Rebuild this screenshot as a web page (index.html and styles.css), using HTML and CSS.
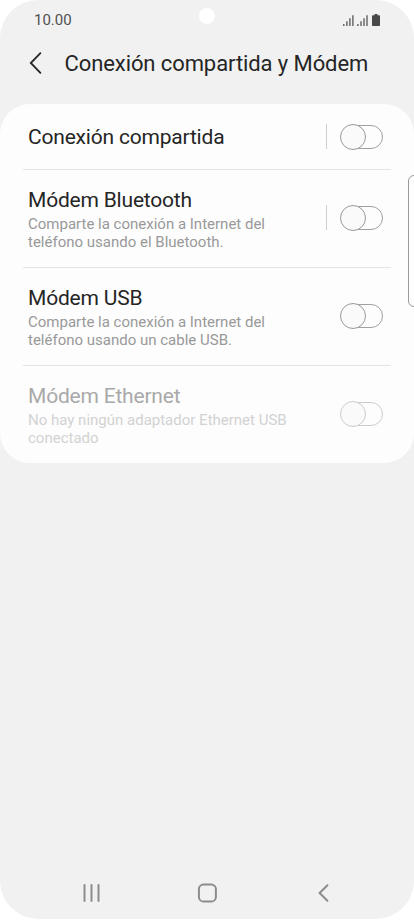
FILE: index.html
```html
<!DOCTYPE html>
<html lang="es">
<head>
<meta charset="utf-8">
<title>Conexión compartida y Módem</title>
<link rel="stylesheet" href="styles.css">
</head>
<body>
<div class="phone">
  <header class="status">
    <span class="time">10.00</span>
    <svg class="indicators" width="40" height="14" viewBox="0 0 40 14">
      <g class="signal">
        <path d="M.8 10v2M3.9 7.2V12M6.9 4.2V12M9.9 1.2V12"/>
        <path d="M14.9 10v2M18 7.2V12M21 4.2V12M24 1.2V12"/>
      </g>
      <path class="battery" d="M31.5 0h3v1.2h1.7q.8 0 .8.8v9.2q0 .8-.8.8h-6.4q-.8 0-.8-.8V2q0-.8.8-.8h1.7z"/>
    </svg>
  </header>
  <div class="camera"></div>
  <div class="titlebar">
    <svg class="back" width="14" height="24" viewBox="0 0 14 24"><path d="M11.4 2.2 1.8 12l9.6 9.8"/></svg>
    <h1>Conexión compartida y Módem</h1>
  </div>
  <main class="card">
    <section class="row short">
      <div class="label"><h2>Conexión compartida</h2></div>
      <i class="separator"></i>
      <div class="toggle"></div>
    </section>
    <section class="row">
      <div class="label"><h2>Módem Bluetooth</h2><p>Comparte la conexión a Internet del<br>teléfono usando el Bluetooth.</p></div>
      <i class="separator"></i>
      <div class="toggle"></div>
    </section>
    <section class="row">
      <div class="label"><h2>Módem USB</h2><p>Comparte la conexión a Internet del<br>teléfono usando un cable USB.</p></div>
      <div class="toggle"></div>
    </section>
    <section class="row disabled">
      <div class="label"><h2>Módem Ethernet</h2><p>No hay ningún adaptador Ethernet USB<br>conectado</p></div>
      <div class="toggle"></div>
    </section>
  </main>
  <div class="edge-handle"></div>
  <nav class="navbar">
    <svg width="20" height="20" viewBox="0 0 20 20"><path d="M3.5 2v16M10.5 2v16M17.5 2v16"/></svg>
    <svg width="20" height="20" viewBox="0 0 20 20"><rect x="1.9" y="1.5" width="17" height="17" rx="4.6"/></svg>
    <svg width="20" height="20" viewBox="0 0 20 20"><path d="M14.4 2.2 6.6 10l7.8 7.8"/></svg>
  </nav>
</div>
</body>
</html>
```
FILE: styles.css
```css
*, *::before { box-sizing: border-box; }

body {
  margin: 0;
  background: #fff;
  font-family: Roboto, sans-serif;
  color: #252525;
}

.phone {
  position: relative;
  display: flex;
  flex-direction: column;
  width: 414px;
  height: 919px;
  overflow: hidden;
  border-radius: 38px;
  background: #f1f1f1;
}

.status {
  display: flex;
  justify-content: space-between;
  align-items: center;
  height: 40px;
  padding: 0 31px 0 34px;
}

.indicators { margin-top: 2px; }

.time {
  font-size: 15px;
  color: #505050;
}

.signal {
  fill: none;
  stroke: #606060;
  stroke-width: 1.4;
}

.battery { fill: #484848; }

.camera {
  position: absolute;
  left: 199px;
  top: 8px;
  width: 16px;
  height: 16px;
  border-radius: 50%;
  background: #fff;
}

.titlebar {
  display: flex;
  align-items: center;
  height: 64px;
  padding: 0 0 16px 29px;
}

.back {
  margin: 0 21.5px 2px 0;
  fill: none;
  stroke: #252525;
  stroke-width: 1.8;
  stroke-linecap: round;
}

h1, h2, p {
  margin: 0;
  font-weight: 400;
  white-space: nowrap;
}

h1 {
  font-size: 22px;
  line-height: 28px;
  letter-spacing: -0.09px;
}

.card {
  height: 359px;
  padding: 0 23px;
  border-radius: 30px;
  background: #fdfdfd;
}

.row {
  display: flex;
  align-items: center;
  height: 98px;
  padding: 0 8px 2px 5px;
  border-bottom: 1px solid #e4e4e4;
}

.row:last-child {
  padding-bottom: 3px;
  border-bottom: 0;
}

.row.short {
  height: 66px;
  padding-bottom: 0;
}

.label {
  flex: 1;
  padding-top: 3px;
}

.short .label { padding-top: 1px; }

h2 {
  font-size: 21px;
  line-height: 26px;
  letter-spacing: -0.2px;
}

p {
  margin-top: 2px;
  font-size: 15px;
  line-height: 18px;
  color: #999;
}

.separator {
  width: 1px;
  height: 25px;
  margin-right: 14px;
  background: #cfcfcf;
}

.toggle {
  position: relative;
  width: 42px;
  height: 24px;
  border: 1px solid #a0a0a0;
  border-radius: 12px;
}

.toggle::before {
  content: "";
  position: absolute;
  left: -2px;
  top: -2px;
  width: 26px;
  height: 26px;
  border: 1px solid #999;
  border-radius: 50%;
  background: #fafafa;
}

.disabled h2 { color: #a9a9a9; }
.disabled p { color: #d2d2d2; }
.disabled .toggle,
.disabled .toggle::before { border-color: #ccc; }

.edge-handle {
  position: absolute;
  left: 408px;
  top: 175px;
  width: 14px;
  height: 132px;
  border: 1px solid #999;
  border-radius: 6px;
  background: #fdfdfd;
}

.navbar {
  display: flex;
  justify-content: space-between;
  margin-top: auto;
  padding: 0 81px 16px 81px;
}

.navbar svg {
  fill: none;
  stroke: #8c8c8c;
  stroke-width: 2;
  stroke-linecap: round;
}
```
